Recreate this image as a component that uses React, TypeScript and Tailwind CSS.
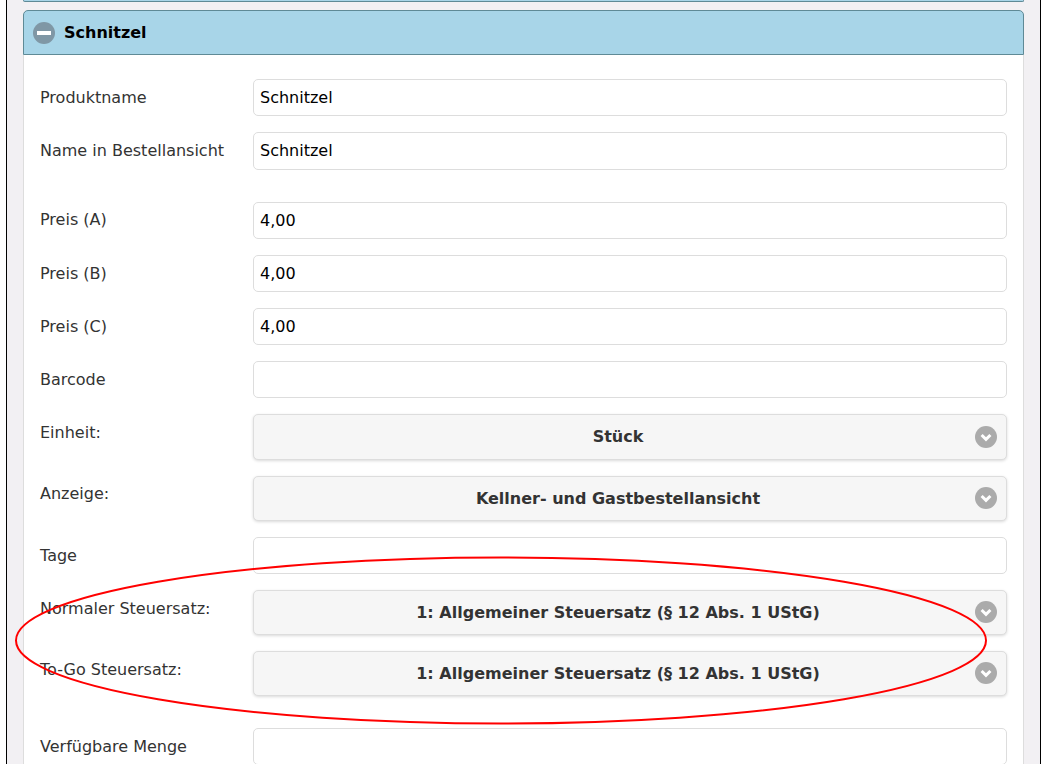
import React from "react";

const font = "font-['DejaVu_Sans',sans-serif]";

function InputRow({ label, value = "", className = "", tall = false, labelUp = false }: { label: string; value?: string; className?: string; tall?: boolean; labelUp?: boolean }) {
  return (
    <div className={`flex items-center ${className}`}>
      <label className={`w-[213px] shrink-0 text-[16px] text-[#333] ${labelUp ? "pb-[2px]" : ""}`}>{label}</label>
      <div className={`${tall ? "h-[38px] leading-[36px]" : "h-[37px] leading-[35px]"} flex-1 rounded-[5px] border border-[#ddd] bg-white px-[6px] text-[16px] text-black`}>
        {value}
      </div>
    </div>
  );
}

function SelectRow({ label, value, className = "", tall = false, labelUp = false }: { label: string; value: string; className?: string; tall?: boolean; labelUp?: boolean }) {
  return (
    <div className={`flex items-start ${className}`}>
      <label className={`w-[213px] shrink-0 ${labelUp ? "pt-[8px]" : "pt-[9px]"} text-[16px] leading-[19px] text-[#333]`}>{label}</label>
      <div className={`relative flex ${tall ? "h-[46px]" : "h-[45px]"} flex-1 items-center justify-center rounded-[5px] border border-[#ddd] bg-[#f6f6f6] pr-[24px] text-[16px] font-bold text-[#333] shadow-[0_1px_3px_rgba(0,0,0,0.15)]`}>
        {value}
        <span className={`absolute right-[9px] ${tall ? "top-[11px]" : "top-[10px]"} flex h-[22px] w-[22px] items-center justify-center rounded-full bg-[#ababab]`}>
          <svg width="14" height="14" viewBox="0 0 14 14" fill="none">
            <path d="M2.6 5 L7 9.4 L11.4 5" stroke="#fff" strokeWidth="3" />
          </svg>
        </span>
      </div>
    </div>
  );
}

export default function App() {
  return (
    <div className={`relative h-[764px] w-[1059px] overflow-hidden bg-white ${font}`}>
      <div className="ml-[6px] h-[764px] w-[1035px] border-x border-x-black bg-[#f2f0f3] px-[16px]">
        <div className="h-[2px] rounded-b-[4px] border-x border-b border-[#5f8a96] bg-[#a8d5e8]" />
        <section className="mt-[8px] rounded-t-[5px]">
          <header className="flex h-[45px] items-center gap-[9px] rounded-t-[5px] border border-[#5f8a96] bg-[#a8d5e8] pl-[9px] text-[16px] font-bold text-black">
            <span className="flex h-[22px] w-[22px] items-center justify-center rounded-full bg-[#7f97a5]">
              <span className="h-[4px] w-[14px] bg-white" />
            </span>
            Schnitzel
          </header>
          <div className="h-[720px] border-x border-[#ddd] bg-white px-[16px] pt-[24px]">
            <InputRow label="Produktname" value="Schnitzel" />
            <InputRow label="Name in Bestellansicht" value="Schnitzel" className="mt-[16px]" tall />
            <InputRow label="Preis (A)" value="4,00" className="mt-[32px]" labelUp />
            <InputRow label="Preis (B)" value="4,00" className="mt-[16px]" />
            <InputRow label="Preis (C)" value="4,00" className="mt-[16px]" />
            <InputRow label="Barcode" className="mt-[16px]" />
            <SelectRow label="Einheit:" value="Stück" className="mt-[16px]" tall />
            <SelectRow label="Anzeige:" value="Kellner- und Gastbestellansicht" className="mt-[16px]" labelUp />
            <InputRow label="Tage" className="mt-[16px]" />
            <SelectRow label="Normaler Steuersatz:" value="1: Allgemeiner Steuersatz (§ 12 Abs. 1 UStG)" className="mt-[16px]" />
            <SelectRow label="To-Go Steuersatz:" value="1: Allgemeiner Steuersatz (§ 12 Abs. 1 UStG)" className="mt-[16px]" />
            <InputRow label="Verfügbare Menge" className="mt-[32px]" />
          </div>
        </section>
      </div>
      <svg className="absolute left-0 top-0 pointer-events-none" width="1059" height="764" viewBox="0 0 1059 764" fill="none">
        <ellipse cx="501" cy="640.5" rx="485" ry="83" stroke="#f00" strokeWidth="2" />
      </svg>
    </div>
  );
}
